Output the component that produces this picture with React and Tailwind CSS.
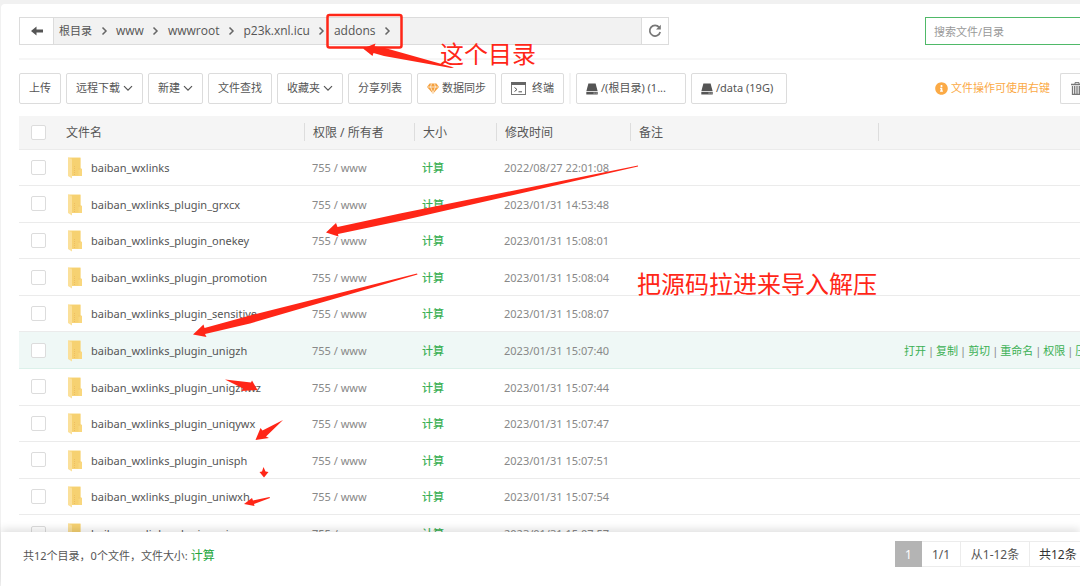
import React, { useState } from "react";
import { FaInfoCircle } from "react-icons/fa";

const files = [
  { name: "baiban_wxlinks", time: "2022/08/27 22:01:08" },
  { name: "baiban_wxlinks_plugin_grxcx", time: "2023/01/31 14:53:48" },
  { name: "baiban_wxlinks_plugin_onekey", time: "2023/01/31 15:08:01" },
  { name: "baiban_wxlinks_plugin_promotion", time: "2023/01/31 15:08:04" },
  { name: "baiban_wxlinks_plugin_sensitive", time: "2023/01/31 15:08:07" },
  { name: "baiban_wxlinks_plugin_unigzh", time: "2023/01/31 15:07:40" },
  { name: "baiban_wxlinks_plugin_unigzhwz", time: "2023/01/31 15:07:44" },
  { name: "baiban_wxlinks_plugin_uniqywx", time: "2023/01/31 15:07:47" },
  { name: "baiban_wxlinks_plugin_unisph", time: "2023/01/31 15:07:51" },
  { name: "baiban_wxlinks_plugin_uniwxh", time: "2023/01/31 15:07:54" },
  { name: "baiban_wxlinks_plugin_unixcx", time: "2023/01/31 15:07:57" },
];

const crumbs = ["根目录", "www", "wwwroot", "p23k.xnl.icu", "addons"];
const actions = ["打开", "复制", "剪切", "重命名", "权限", "压缩"];

const ArrowLeft = () => (
  <svg width="12" height="10" viewBox="0 0 12 10" fill="#555">
    <path d="M0 5 5.500 0.500V3.500H12V6.500H5.500V9.500z" />
  </svg>
);

const ChevronRight = () => (
  <svg width="7" height="10" viewBox="0 0 7 10" fill="none" stroke="#666" strokeWidth="1.5">
    <path d="M1.5 1.5 5 5 1.5 8.5" />
  </svg>
);

const ChevronDown = () => (
  <svg width="10" height="7" viewBox="0 0 10 7" fill="none" stroke="#555" strokeWidth="1.2">
    <path d="M1 1.2 5 5.2 9 1.2" />
  </svg>
);

const RefreshIcon = () => (
  <svg width="14" height="14" viewBox="0 0 14 14" fill="none">
    <path d="M11.2 3.4A5.3 5.3 0 1 0 12.2 8" stroke="#777" strokeWidth="1.7" />
    <path d="M12.8 0.8V5.6H8z" fill="#777" />
  </svg>
);

const GemIcon = () => (
  <svg width="12" height="11" viewBox="0 0 12 11">
    <path d="M2.6 0.5h6.8L12 4 6 10.8 0 4z" fill="#f5a03c" />
    <path d="M0.6 4h10.8M3.6 4 6 10 8.4 4M3.6 4 4.4 0.8M8.4 4 7.6 0.8" stroke="#fff" strokeWidth="0.7" fill="none" />
  </svg>
);

const TerminalIcon = () => (
  <svg width="15" height="13" viewBox="0 0 15 13" fill="none">
    <rect x="0.5" y="0.5" width="14" height="12" stroke="#777" />
    <rect x="0" y="0" width="15" height="3" fill="#666" />
    <path d="M3.5 5.5 6 7.5 3.5 9.5M7.5 9.8h3.5" stroke="#555" />
  </svg>
);

const DiskIcon = () => (
  <svg width="12" height="12" viewBox="0 0 12 12">
    <path d="M2.4 0.5h7.2L11.6 8H0.4z" fill="#555" />
    <path d="M0.3 8.8h11.4v2.7H0.3z" fill="#555" />
    <path d="M7.6 10.1h1M9.6 10.1h1" stroke="#fff" strokeWidth="0.8" />
  </svg>
);

const TrashIcon = () => (
  <svg width="12" height="13" viewBox="0 0 12 13" fill="none" stroke="#777">
    <path d="M0 2.5h12" strokeWidth="1.6" />
    <path d="M4 2V0.600h4V2" />
    <path d="M1.500 4v8.400h9V4M3.700 4v8M6 4v8M8.300 4v8" strokeWidth="1.3" />
  </svg>
);

const FolderIcon = () => (
  <svg width="16" height="22" viewBox="0 0 16 22" className="shrink-0">
    <path d="M1 0.5h12.5V11l1.5 1v7H4z" fill="#f9d77e" />
    <path d="M5 1h8.3v10.5H11.5v7H5z" fill="#f6d171" />
    <path d="M1 0.5 5 2.5v19L1 19z" fill="#fbe09a" />
    <path d="M7.5 9v9M11.6 12h1.8" stroke="#edb95e" strokeWidth="0.8" strokeDasharray="1 1" />
  </svg>
);

const ToolButton = ({ children }) => (
  <button className="flex h-[31px] shrink-0 items-center gap-[3px] whitespace-nowrap rounded-[2px] border border-[#dcdcdc] bg-white px-[9px] text-[11px] text-[#555]">
    {children}
  </button>
);

const CheckBox = ({ label, checked, onChange }) => (
  <input
    type="checkbox"
    aria-label={label}
    checked={checked}
    onChange={onChange}
    className="block size-[15px] appearance-none rounded-[2px] border border-[#dcdcdc] bg-white checked:bg-[#20a53a]"
  />
);

const HeadCell = ({ children }) => (
  <th className="relative pl-[9px] pt-[2px] text-left font-normal">
    <span className="absolute left-0 top-[7px] h-[18px] w-px bg-[#ddd]"></span>
    {children}
  </th>
);

const Annotations = () => (
  <div className="pointer-events-none absolute inset-0 overflow-hidden">
    <svg width="1080" height="586" viewBox="0 0 1080 586" className="absolute left-0 top-0" fill="#ff2617">
      <rect x="327.5" y="15" width="74" height="32.5" rx="2" fill="none" stroke="#ff2617" strokeWidth="2.5" />
      <path d="M363 48.500 375.500 43.500 374.500 46.500 385 48 454 67.500 451 68 384 56 373.500 53 372.500 56z" />
      <path d="M326 232.500 336 223 337.500 227 400 213.500 638 165.500 638 166.500 400 221 338 234 338.500 236.500z" />
      <path d="M193 334.500 203.500 324.500 204.500 328 250 315.500 417 273.500 417.500 274.500 250 323.500 205 334 206.500 337z" />
      <path d="M225 379.500 251 382.500 252 380.500 257.500 390 241.500 391 243 388.500z" />
      <path d="M255.500 440 260.500 428 262.500 430.500 283 420 266 436.500 269 438z" />
      <path d="M263.500 467 265.500 471.500 268.500 472 264 477.500 259.500 472 262 471.500z" />
      <path d="M244 504 252 498 253 500.500 269.500 497 270 498 254 504 254.500 506z" />
    </svg>
    <span className="absolute left-[440px] top-[36px] text-[24px] leading-[36px] text-[#ff2617]">这个目录</span>
    <span className="absolute left-[637px] top-[266px] text-[24px] leading-[36px] text-[#ff2617]">把源码拉进来导入解压</span>
  </div>
);

export default function App() {
  const [selected, setSelected] = useState([]);

  const toggle = (name) => {
    setSelected(selected.includes(name) ? selected.filter((n) => n !== name) : [...selected, name]);
  };
  const toggleAll = () => {
    setSelected(selected.length === files.length ? [] : files.map((f) => f.name));
  };

  return (
    <div className="relative h-screen overflow-hidden bg-[#f1f1f1] pl-px pt-1 font-['Noto_Sans','Noto_Sans_CJK_SC',sans-serif] text-[12px] text-[#555]">
      <div className="flex h-full flex-col rounded-tl-[4px] bg-white">
        <header className="ml-[18px] flex h-[56px] shrink-0 items-start justify-between border-b-2 border-[#f6f6f6] pt-[13px]">
          <nav className="flex h-[28px] w-[650px] border border-[#dcdcdc] bg-[#f2f2f2]">
            <button aria-label="返回" className="flex w-[34px] items-center justify-center border-r border-[#dcdcdc] bg-white">
              <ArrowLeft />
            </button>
            <ul className="flex flex-1 items-center pl-[5px] font-['Open_Sans','Noto_Sans_CJK_SC',sans-serif]">
              {crumbs.map((item, index) => (
                <li key={item} className="flex items-center">
                  <a href="#" className={index === 0 ? "text-[11px]" : "text-[12px]"}>
                    {item}
                  </a>
                  <span className="flex w-[24px] justify-center">
                    <ChevronRight />
                  </span>
                </li>
              ))}
            </ul>
            <button aria-label="刷新" className="flex w-[27px] items-center justify-center border-l border-[#dcdcdc] bg-white">
              <RefreshIcon />
            </button>
          </nav>
          <input
            type="text"
            aria-label="搜索文件/目录"
            placeholder="搜索文件/目录"
            className="h-[28px] w-[155px] border border-r-0 border-[#4fb968] bg-white px-2 text-[11px] outline-none placeholder:text-[#999]"
          />
        </header>

        <div className="ml-[18px] flex shrink-0 items-center justify-between pb-3 pt-[13px]">
          <div className="flex items-center gap-[5px]">
            <ToolButton>上传</ToolButton>
            <ToolButton>
              远程下载 <ChevronDown />
            </ToolButton>
            <ToolButton>
              新建 <ChevronDown />
            </ToolButton>
            <ToolButton>文件查找</ToolButton>
            <ToolButton>
              收藏夹 <ChevronDown />
            </ToolButton>
            <ToolButton>分享列表</ToolButton>
            <ToolButton>
              <GemIcon /> 数据同步
            </ToolButton>
            <ToolButton>
              <TerminalIcon />
              <span className="pl-[3px]">终端</span>
            </ToolButton>
            <span className="h-[31px] w-[2px] bg-[#f4f4f4]"></span>
            <ToolButton>
              <DiskIcon /> <span className="w-[75px] text-left">/(根目录) (1...</span>
            </ToolButton>
            <ToolButton>
              <DiskIcon /> <span className="w-[61px] text-left">/data (19G)</span>
            </ToolButton>
          </div>
          <div className="flex items-center gap-[10px]">
            <p className="flex items-center gap-[3px] text-[11px] text-[#fbaa46]">
              <FaInfoCircle size={13} /> 文件操作可使用右键
            </p>
            <button
              aria-label="回收站"
              className="flex h-[31px] w-[20px] items-center overflow-hidden rounded-l-[2px] border border-r-0 border-[#dcdcdc] pl-[10px]">
              <span className="shrink-0">
                <TrashIcon />
              </span>
            </button>
          </div>
        </div>

        <main className="ml-[18px] min-h-0 flex-1 overflow-hidden">
          <table className="h-[436px] w-full table-fixed border-collapse">
            <colgroup>
              <col className="w-[38px]" />
              <col className="w-[247px]" />
              <col className="w-[110px]" />
              <col className="w-[82px]" />
              <col className="w-[134px]" />
              <col className="w-[248px]" />
              <col />
            </colgroup>
            <thead>
              <tr className="h-[33px] border-b border-[#ebebeb] bg-[#f5f5f5]">
                <th className="pl-3">
                  <CheckBox label="全选" checked={selected.length === files.length} onChange={toggleAll} />
                </th>
                <th className="pl-[9px] pt-[2px] text-left font-normal">文件名</th>
                <HeadCell>权限 / 所有者</HeadCell>
                <HeadCell>大小</HeadCell>
                <HeadCell>修改时间</HeadCell>
                <HeadCell>备注</HeadCell>
                <HeadCell></HeadCell>
              </tr>
            </thead>
            <tbody className="text-[11px]">
              {files.map((file, index) => (
                <tr
                  key={file.name}
                  className={
                    index === 5 ? "border-y border-[#dcf1ea] bg-[#eff8f6]" : "border-b border-[#ebebeb]"
                  }>
                  <td className="pl-3">
                    <CheckBox label={file.name} checked={selected.includes(file.name)} onChange={() => toggle(file.name)} />
                  </td>
                  <td className="pl-[10px] pt-[2px]">
                    <div className="flex items-center gap-2">
                      <FolderIcon />
                      <a href="#" className="whitespace-nowrap">
                        {file.name}
                      </a>
                    </div>
                  </td>
                  <td className="pl-2 pt-[2px] text-[#888]">755 / www</td>
                  <td className="pl-2 pt-[2px] font-medium text-[#3bb054]">
                    <a href="#">计算</a>
                  </td>
                  <td className="whitespace-nowrap pl-2 pt-[2px] text-[#888]">{file.time}</td>
                  <td></td>
                  <td className="overflow-hidden whitespace-nowrap pl-[26px] pt-[2px]">
                    {index === 5 &&
                      actions.map((action, i) => (
                        <React.Fragment key={action}>
                          {i > 0 && <span className="px-[2px] text-[#888]">|</span>}
                          <a href="#" className="text-[#3bb054]">
                            {action}
                          </a>
                        </React.Fragment>
                      ))}
                  </td>
                </tr>
              ))}
            </tbody>
          </table>
        </main>

        <footer className="z-10 flex h-[54px] shrink-0 items-start justify-between bg-white pl-[22px] shadow-[0_-3px_8px_rgba(0,0,0,0.12)]">
          <p className="pt-[15px] text-[11px] leading-[18px]">
            共12个目录，0个文件，文件大小:{" "}
            <a href="#" className="text-[12px] text-[#20a53a]">
              计算
            </a>
          </p>
          <div className="mt-[9px] flex h-[26px] items-stretch border-y border-[#ececec] leading-[26px]">
            <span className="-my-px w-[27px] bg-[#b4b4b4] text-center leading-[28px] text-white">1</span>
            <span className="w-[39px] border-r border-[#ececec] text-center">1/1</span>
            <span className="w-[69px] border-r border-[#ececec] text-center">从1-12条</span>
            <span className="w-[50px] whitespace-nowrap pl-[9px] text-[#333]">共12条</span>
          </div>
        </footer>
      </div>
      <Annotations />
    </div>
  );
}
